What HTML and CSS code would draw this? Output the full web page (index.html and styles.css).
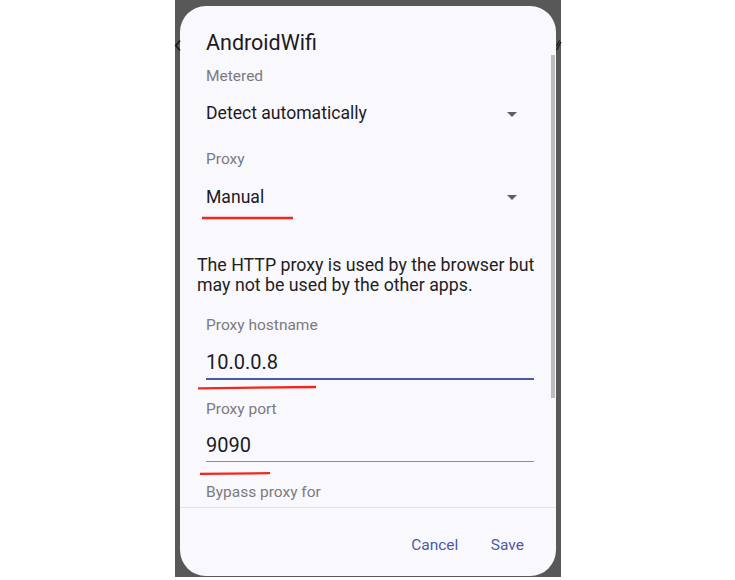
FILE: index.html
```html
<!DOCTYPE html>
<html lang="en">
<head>
<meta charset="utf-8">
<title>AndroidWifi</title>
<link rel="stylesheet" href="styles.css">
</head>
<body>
<div class="screen">
  <div class="dialog">
    <div class="content">
      <h1 class="title">AndroidWifi</h1>
      <div class="label l-metered">Metered</div>
      <div class="spinner s-metered"><span>Detect automatically</span><span class="caret"></span></div>
      <div class="label l-proxy">Proxy</div>
      <div class="spinner s-proxy"><span>Manual</span><span class="caret"></span></div>
      <p class="note">The HTTP proxy is used by the browser but may not be used by the other apps.</p>
      <div class="label l-host">Proxy hostname</div>
      <div class="field f-host focused">10.0.0.8</div>
      <div class="label l-port">Proxy port</div>
      <div class="field f-port">9090</div>
      <div class="label l-bypass">Bypass proxy for</div>
    </div>
    <div class="actions">
      <span class="btn">Cancel</span>
      <span class="btn">Save</span>
    </div>
    <div class="scrollbar"></div>
  </div>
</div>
<svg class="marks" width="735" height="580" viewBox="0 0 735 580" aria-hidden="true">
  <path d="M180 40.5 L175.8 45.5 L180 50.5" fill="none" stroke="#1e1e1e" stroke-width="1.8"/>
  <path d="M556.5 50 L561 42 M556.5 46 L559.5 40.5" fill="none" stroke="#1e1e1e" stroke-width="1.4"/>
  <line x1="202" y1="218" x2="293" y2="218" stroke="#f3261b" stroke-width="2.3"/>
  <line x1="198" y1="388.3" x2="316" y2="387" stroke="#f3261b" stroke-width="2.3"/>
  <line x1="200" y1="473.8" x2="270" y2="473.2" stroke="#f3261b" stroke-width="2.3"/>
</svg>
</body>
</html>
```
FILE: styles.css
```css
html, body {
  margin: 0;
  padding: 0;
  background: #ffffff;
}

body {
  position: relative;
  width: 735px;
  height: 580px;
  overflow: hidden;
  font-family: Roboto, "Noto Sans", "Liberation Sans", sans-serif;
}

.screen {
  box-sizing: border-box;
  margin-left: 175px;
  width: 386px;
  height: 577px;
  padding: 6px 5px 0 5px;
  background: #585858;
}

.dialog {
  position: relative;
  width: 376px;
  height: 570px;
  border-radius: 26px;
  background: #f9f8fd;
  overflow: hidden;
  display: flex;
  flex-direction: column;
}

.content {
  box-sizing: border-box;
  height: 501px;
  padding: 23.6px 22px 0 26px;
  overflow: hidden;
}

.title {
  margin: 0;
  font-size: 21.5px;
  line-height: 26px;
  font-weight: 400;
  color: #1c1b1f;
}

.label {
  font-size: 15.5px;
  line-height: 20px;
  color: #7b7b7e;
}

.l-metered { margin-top: 10.1px; }
.l-proxy { margin-top: 24.4px; }
.l-host { margin-top: 19.6px; }
.l-port { margin-top: 18.5px; }
.l-bypass { margin-top: 19.7px; }

.spinner {
  display: flex;
  align-items: center;
  justify-content: space-between;
  padding-right: 17px;
  font-size: 17.6px;
  line-height: 22px;
  color: #1c1b1f;
}

.s-metered { margin-top: 16.6px; }
.s-proxy { margin-top: 17px; }

.caret {
  width: 0;
  height: 0;
  border-left: 5px solid transparent;
  border-right: 5px solid transparent;
  border-top: 5px solid #5f5f62;
  margin-top: 2px;
}

.note {
  margin: 47.1px 0 0 -9px;
  width: 345px;
  font-size: 17.75px;
  line-height: 20.5px;
  color: #1f1f22;
}

.field {
  font-size: 20px;
  line-height: 24px;
  color: #1c1b1f;
  padding-bottom: 4px;
  border-bottom: 1px solid #8e8e91;
}

.f-host { margin-top: 14.8px; }
.f-port { margin-top: 14.2px; padding-bottom: 4.4px; }

.field.focused {
  border-bottom: 2px solid #4b5aa6;
}

.actions {
  flex: 1;
  display: flex;
  justify-content: flex-end;
  gap: 32.5px;
  padding: 26.7px 32px 0 0;
  border-top: 1px solid #e3e2e8;
}

.btn {
  font-size: 15.5px;
  line-height: 20px;
  color: #4b5ba4;
}

.scrollbar {
  position: absolute;
  top: 49px;
  right: 1px;
  width: 4px;
  height: 343px;
  background: #bcbcbf;
}

.marks {
  position: absolute;
  left: 0;
  top: 0;
  pointer-events: none;
}
```
